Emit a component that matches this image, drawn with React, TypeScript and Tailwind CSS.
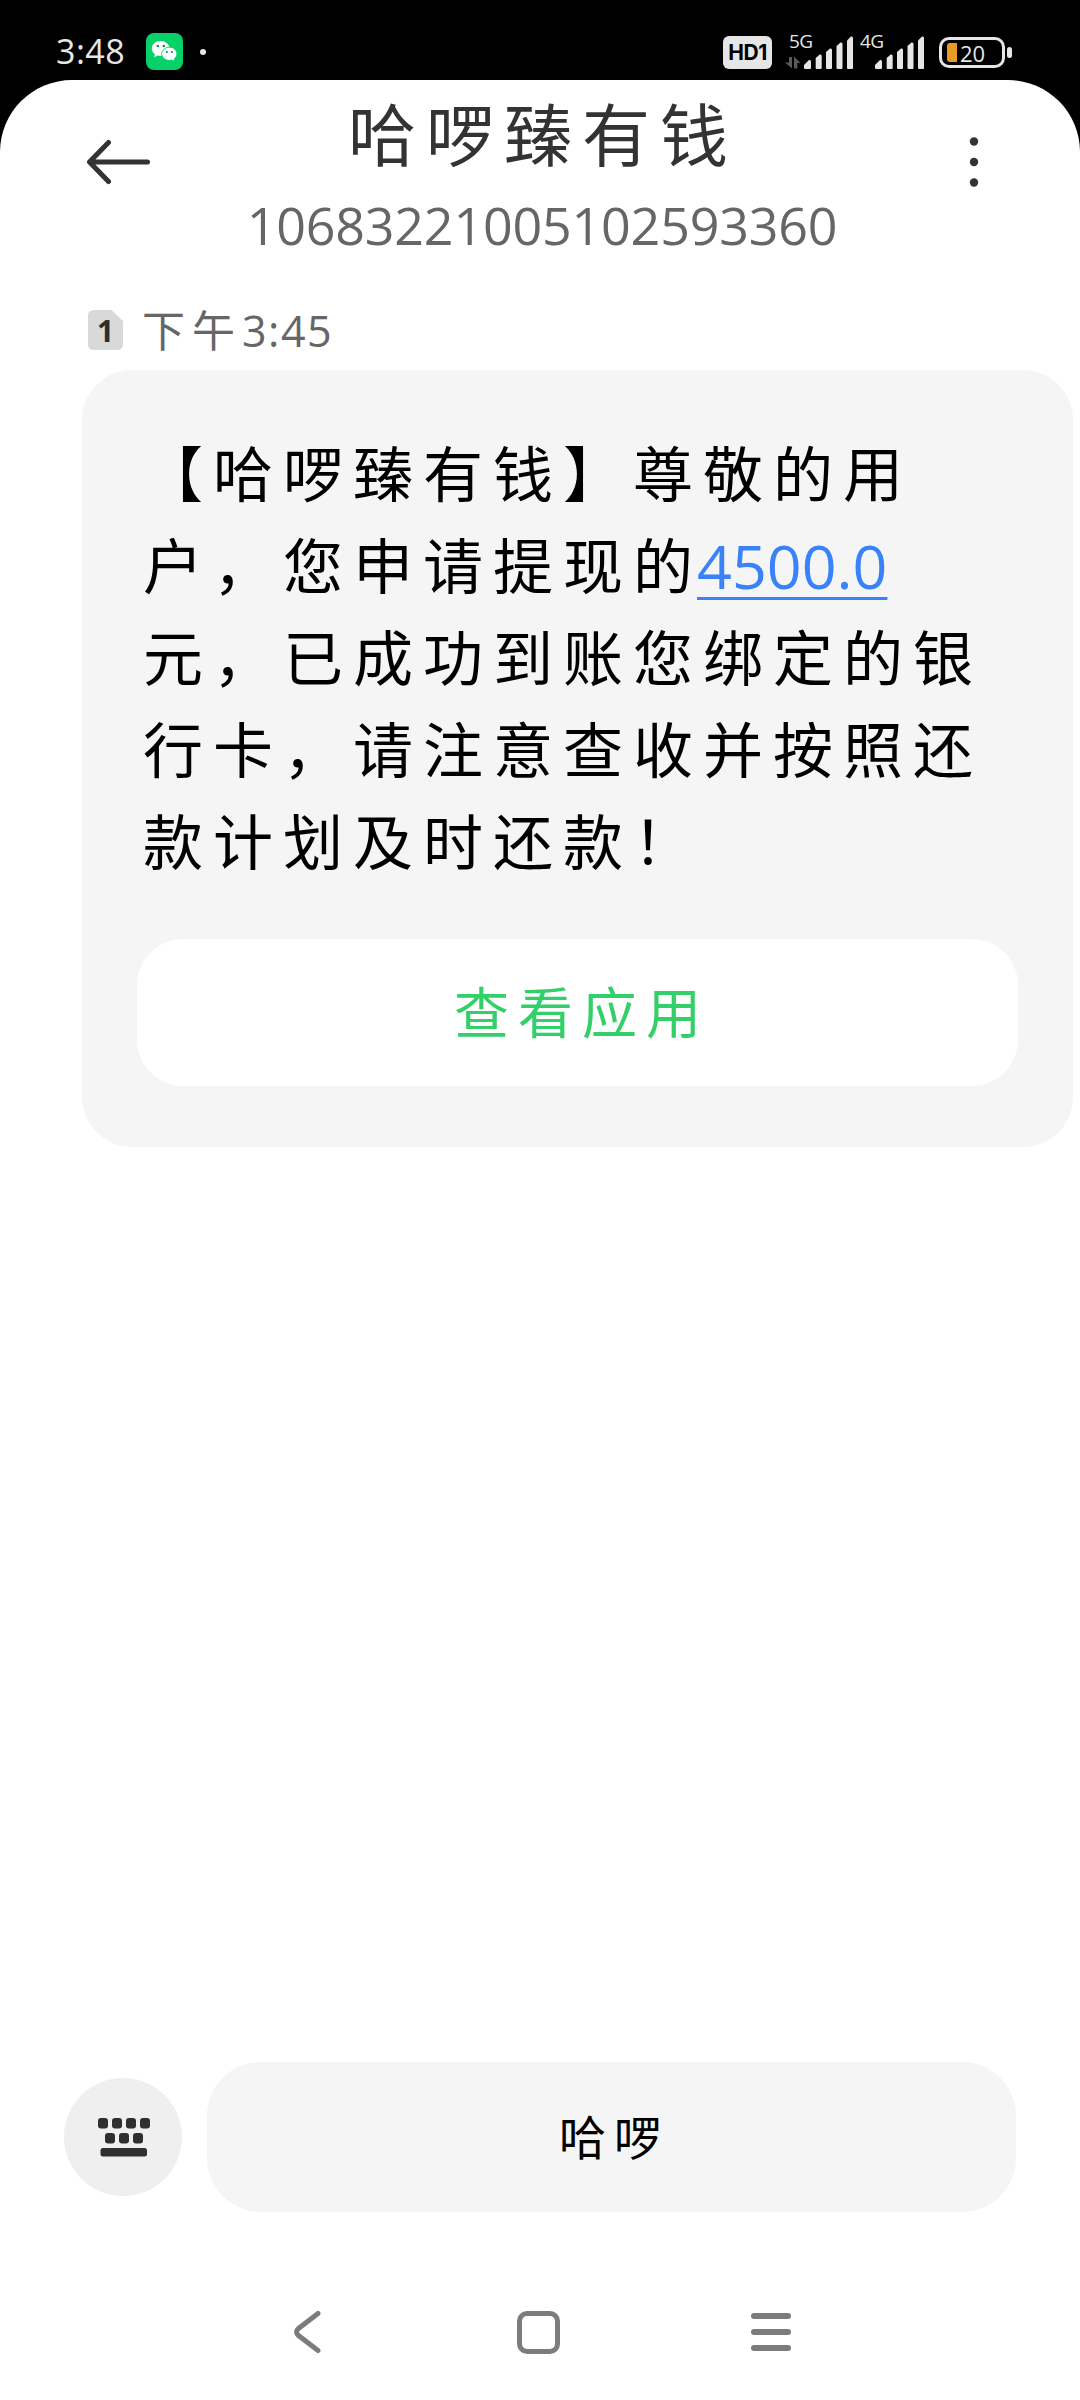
import React from 'react';

interface SignalProps {
    /** Network label drawn above the bars */
    label: string;
    /** Whether to show the data transfer arrows */
    transfer?: boolean;
}

const MESSAGE_TAIL = [
    '元，已成功到账您绑定的银',
    '行卡，请注意查收并按照还',
    '款计划及时还款！',
];

const WeChatIcon: React.FC = () => (
    <svg width="37" height="37" viewBox="0 0 37 37" className="block shrink-0">
        <rect width="37" height="37" rx="8" fill="#05d168" />
        <path d="M14.5 8C9.500 8 5.800 11.300 5.800 15.400c0 2.400 1.200 4.400 3.200 5.800l-.9 3 3.600-1.800c.9.250 1.800.4 2.800.4 5 0 9-3.300 9-7.400S19.500 8 14.500 8z" fill="#fff" />
        <path d="M23.300 14.200c-4.300 0-7.600 2.900-7.600 6.600s3.300 6.600 7.600 6.600c.9 0 1.700-.1 2.500-.35l3 1.500-.7-2.500c1.700-1.200 2.800-3.100 2.800-5.250 0-3.700-3.300-6.600-7.600-6.600z" fill="#fff" stroke="#05d168" strokeWidth="0.900" />
        <circle cx="11.800" cy="13" r="1.200" fill="#078c50" />
        <circle cx="17.800" cy="13" r="1.200" fill="#078c50" />
        <circle cx="20.900" cy="19" r="1" fill="#078c50" />
        <circle cx="25.900" cy="19" r="1" fill="#078c50" />
    </svg>
);

const Signal: React.FC<SignalProps> = ({ label, transfer = false }) => (
    <div className="relative w-[71px] h-[37px]">
        <span className="absolute left-[5px] top-0 text-[19px] leading-[19px] tracking-[-0.5px]">{label}</span>
        <svg width="71" height="37" viewBox="0 0 71 37" className="absolute left-0 top-0 block">
            {transfer && (
                <g fill="#5a5a5a">
                    <path d="M5 25h3v11.500L1 30.500h4z" />
                    <path d="M10 36.500V24.500l6.500 6.500h-3.200v5.500z" />
                </g>
            )}
            <g fill="#e6e6e6">
                <path d="M20 36v-3l5-5q2-.5 2 1.500V36q0 1-1 1h-5q-1 0-1-1z" />
                <path d="M31.700 36V26l4-3.500q2-.500 2 1.500v12q0 1-1 1h-4q-1 0-1-1z" />
                <path d="M42 36V20l4-3.500q2-.500 2 1.500v18q0 1-1 1h-4q-1 0-1-1z" />
                <path d="M52.500 36V14l4-3.500q2-.500 2 1.500v24q0 1-1 1h-4q-1 0-1-1z" />
                <path d="M63 36V8.500l4-4q2-.500 2 1.500v30q0 1-1 1h-4q-1 0-1-1z" />
            </g>
        </svg>
    </div>
);

const StatusBar: React.FC = () => (
    <div className="flex h-[80px] pt-[32px] pl-[56px] pr-[68px] justify-between items-start text-[#e6e6e6]">
        <div className="flex items-center h-[39px]">
            <span className="w-[90px] text-[34px] leading-[39px] tracking-[0.5px] whitespace-nowrap">3:48</span>
            <WeChatIcon />
            <span className="ml-[17px] size-[6px] rounded-full bg-[#e6e6e6]" />
        </div>
        <div className="flex items-start">
            <div className="mt-[4px] flex w-[49px] h-[33px] items-center justify-center rounded-[6px] bg-[#e6e6e6] text-black font-['Inter'] text-[21px] font-bold leading-none tracking-[-0.5px]">
                HD1
            </div>
            <div className="ml-[12px] flex">
                <Signal label="5G" transfer />
                <Signal label="4G" />
            </div>
            <div className="mt-[5px] ml-[13px] flex items-center">
                <div className="flex w-[66px] h-[31px] items-center rounded-[10px] border-[3px] border-[#e6e6e6] pl-[5px]">
                    <span className="w-[10px] h-[19px] rounded-l-[3px] bg-[#e69b24]" />
                    <span className="ml-[3px] text-[22px] leading-none">20</span>
                </div>
                <span className="ml-[2px] w-[5px] h-[11px] rounded-[3px] bg-[#e6e6e6]" />
            </div>
        </div>
    </div>
);

const Header: React.FC = () => (
    <header className="flex h-[205px] justify-between pl-[86px] pr-[101px]">
        <svg width="65" height="46" viewBox="0 0 65 46" className="mt-[59px] block" fill="none" stroke="#333" strokeWidth="5" strokeLinecap="round" strokeLinejoin="round">
            <path d="M61.500 23H4M22.500 3.500L3.500 23l19 19.500" />
        </svg>
        <div className="mr-[36px] flex flex-col items-center">
            <h1 className="mt-[10px] h-[90px] pl-[2px] text-[68px] leading-[90px] font-normal tracking-[10px] text-[#333] whitespace-nowrap">
                哈啰臻有钱
            </h1>
            <p className="mt-[15px] text-[52px] leading-[60px] tracking-[-0.2px] text-[#666] whitespace-nowrap">
                10683221005102593360
            </p>
        </div>
        <svg width="10" height="52" viewBox="0 0 10 52" className="mt-[56px] block" fill="#333">
            <circle cx="5" cy="5.500" r="4.200" />
            <circle cx="5" cy="26" r="4.200" />
            <circle cx="5" cy="46.500" r="4.200" />
        </svg>
    </header>
);

const Timestamp: React.FC = () => (
    <div className="flex h-[85px] pl-[88px] pt-[17px] text-[#666]">
        <div className="relative mt-[8px] w-[35px] h-[40px]">
            <svg width="35" height="40" viewBox="0 0 35 40" className="absolute inset-0">
                <path d="M6 0h17.500L35 11v23q0 6-6 6H6q-6 0-6-6V6q0-6 6-6z" fill="#d9d9d9" />
            </svg>
            <span className="absolute inset-0 text-center font-['Noto_Sans'] text-[30px] leading-[41px] font-bold text-[#2d2d2d]">1</span>
        </div>
        <span className="ml-[19px] text-[43px] leading-[58px] tracking-[7px]">下午</span>
        <span className="text-[43px] leading-[58px] tracking-[1.500px]">3:45</span>
    </div>
);

const MessageCard: React.FC = () => (
    <section className="ml-[82px] w-[991px] h-[777px] rounded-[50px] bg-[#f5f5f5] px-[55px] pt-[58px]">
        <div className="pl-[6px] text-[60px] leading-[92px] tracking-[10px] text-black whitespace-nowrap">
            <p className="h-[92px]">【哈啰臻有钱】尊敬的用</p>
            <p className="flex h-[92px]">
                <span className="w-[554px]">户，您申请提现的</span>
                <a className="text-[61px] tracking-normal text-[#3a82f7] underline decoration-[3px] underline-offset-[8px]">4500.0</a>
            </p>
            {MESSAGE_TAIL.map((line) => (
                <p key={line} className="h-[92px]">{line}</p>
            ))}
        </div>
        <button className="mt-[51px] flex w-[881px] h-[147px] items-center justify-center rounded-[46px] bg-white pl-[9px] text-[55px] tracking-[9px] text-[#33d069]">
            查看应用
        </button>
    </section>
);

const Composer: React.FC = () => (
    <div className="flex h-[150px] items-center pl-[64px]">
        <div className="flex size-[118px] items-center justify-center rounded-full bg-[#efefef] pl-[2px]">
            <svg width="52" height="39" viewBox="0 0 52 39" fill="#2f2f2f">
                <rect x="0" y="0" width="10" height="10.500" rx="3" />
                <rect x="14" y="0" width="10" height="10.500" rx="3" />
                <rect x="28" y="0" width="10" height="10.500" rx="3" />
                <rect x="42" y="0" width="10" height="10.500" rx="3" />
                <rect x="7" y="15" width="10" height="10.500" rx="3" />
                <rect x="21" y="15" width="10" height="10.500" rx="3" />
                <rect x="35" y="15" width="10" height="10.500" rx="3" />
                <rect x="2.500" y="30" width="46.500" height="8.500" rx="2.500" />
            </svg>
        </div>
        <div className="ml-[25px] flex w-[809px] h-[150px] items-center justify-center rounded-[54px] bg-[#f5f5f5] pl-[5px] text-[47px] tracking-[8px] text-black">
            哈啰
        </div>
    </div>
);

const NavBar: React.FC = () => (
    <nav className="flex h-[44px] items-center pl-[292px]">
        <svg width="32" height="44" viewBox="0 0 32 44" fill="none" stroke="#7c7c7c" strokeWidth="5" strokeLinecap="round">
            <path d="M26 3.500L6.500 18.500q-4 3.500 0 7L26 40.500" />
        </svg>
        <span className="ml-[193px] w-[43px] h-[43px] rounded-[10px] border-[5px] border-[#7c7c7c]" />
        <div className="ml-[191px] flex flex-col gap-[10px]">
            <span className="w-[40px] h-[6px] rounded-[3px] bg-[#7c7c7c]" />
            <span className="w-[40px] h-[6px] rounded-[3px] bg-[#7c7c7c]" />
            <span className="w-[40px] h-[6px] rounded-[3px] bg-[#7c7c7c]" />
        </div>
    </nav>
);

export default function App() {
    return (
        <div className="w-[1080px] h-[2400px] overflow-hidden bg-black font-['Open_Sans','Noto_Sans_CJK_SC',sans-serif]">
            <StatusBar />
            <main className="flex h-[2320px] flex-col rounded-t-[72px] bg-white">
                <Header />
                <Timestamp />
                <MessageCard />
                <div className="h-[915px]" />
                <Composer />
                <div className="h-[98px]" />
                <NavBar />
            </main>
        </div>
    );
}
